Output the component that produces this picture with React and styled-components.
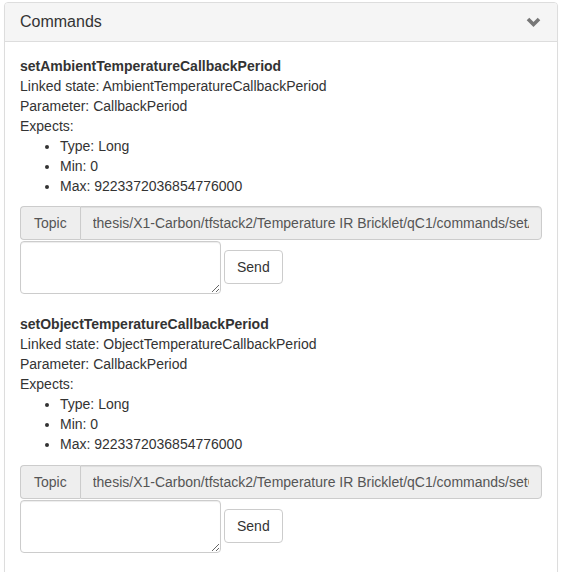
import React from "react";
import styled, { createGlobalStyle } from "styled-components";

const Global = createGlobalStyle`
  * { box-sizing: border-box; }
  body {
    margin: 0;
    background: #fff;
    font-family: "Liberation Sans", Arial, Helvetica, sans-serif;
    font-size: 14px;
    line-height: 1.42857;
    color: #333;
  }
`;

const Page = styled.div`
  padding: 2px 8px 0 4px;
`;

const Panel = styled.div`
  border: 1px solid #ddd;
  border-radius: 4px;
  background: #fff;
  box-shadow: 0 1px 1px rgba(0, 0, 0, 0.05);
`;

const Heading = styled.div`
  display: flex;
  align-items: center;
  justify-content: space-between;
  padding: 10px 15px;
  background: #f5f5f5;
  border-bottom: 1px solid #ddd;
  border-radius: 3px 3px 0 0;
`;

const Title = styled.h3`
  margin: 0;
  font-size: 16px;
  font-weight: normal;
  line-height: 1.1;
  color: #333;
`;

const Chevron = styled.svg`
  width: 15px;
  height: 12px;
  margin-right: 1px;
`;

const Body = styled.div`
  padding: 15px;
`;

const Command = styled.div`
  margin-bottom: 21px;
`;

const Name = styled.div`
  font-weight: bold;
`;

const Line = styled.div``;

const List = styled.ul`
  margin: 0 0 10px;
  padding-left: 40px;
`;

const InputGroup = styled.div`
  display: flex;
  width: 100%;
  height: 34px;
`;

const Addon = styled.span`
  display: flex;
  align-items: center;
  padding: 7px 13px 5px 13px;
  font-size: 14px;
  color: #555;
  background: #eee;
  border: 1px solid #ccc;
  border-right: 0;
  border-radius: 4px 0 0 4px;
  white-space: nowrap;
`;

const TopicInput = styled.input`
  flex: 1;
  min-width: 0;
  height: 34px;
  padding: 6px 12px;
  font-family: inherit;
  font-size: 14px;
  color: #555;
  background: #eee;
  border: 1px solid #ccc;
  border-radius: 0 4px 4px 0;
  box-shadow: inset 0 1px 1px rgba(0, 0, 0, 0.075);
  outline: none;
`;

const SendRow = styled.div`
  display: flex;
  align-items: center;
  gap: 3px;
  margin-top: 1px;
`;

const Area = styled.textarea`
  width: 201px;
  height: 53px;
  padding: 6px 12px;
  font-family: inherit;
  font-size: 14px;
  border: 1px solid #ccc;
  border-radius: 4px;
  box-shadow: inset 0 1px 1px rgba(0, 0, 0, 0.075);
  resize: both;
  margin: 0;
  display: block;
`;

const Button = styled.button`
  height: 34px;
  padding: 6px 12px;
  font-family: inherit;
  font-size: 14px;
  color: #333;
  background: #fff;
  border: 1px solid #ccc;
  border-radius: 4px;
  cursor: pointer;
  margin-top: -1px;
`;

const commands = [
  {
    name: "setAmbientTemperatureCallbackPeriod",
    state: "AmbientTemperatureCallbackPeriod",
    topic:
      "thesis/X1-Carbon/tfstack2/Temperature IR Bricklet/qC1/commands/setAmbientTemperatureCallbackPeriod",
  },
  {
    name: "setObjectTemperatureCallbackPeriod",
    state: "ObjectTemperatureCallbackPeriod",
    topic:
      "thesis/X1-Carbon/tfstack2/Temperature IR Bricklet/qC1/commands/setObjectTemperatureCallbackPeriod",
  },
];

export default function App() {
  return (
    <Page>
      <Global />
      <Panel>
        <Heading>
          <Title>Commands</Title>
          <Chevron viewBox="0 0 15 12">
            <path d="M2 3 L7.5 8.5 L13 3" fill="none" stroke="#777" strokeWidth="3.6" />
          </Chevron>
        </Heading>
        <Body>
          {commands.map((c) => (
            <Command key={c.name}>
              <Name>{c.name}</Name>
              <Line>Linked state: {c.state}</Line>
              <Line>Parameter: CallbackPeriod</Line>
              <Line>Expects:</Line>
              <List>
                <li>Type: Long</li>
                <li>Min: 0</li>
                <li>Max: 9223372036854776000</li>
              </List>
              <InputGroup>
                <Addon>Topic</Addon>
                <TopicInput readOnly value={c.topic} />
              </InputGroup>
              <SendRow>
                <Area />
                <Button>Send</Button>
              </SendRow>
            </Command>
          ))}
        </Body>
      </Panel>
    </Page>
  );
}
